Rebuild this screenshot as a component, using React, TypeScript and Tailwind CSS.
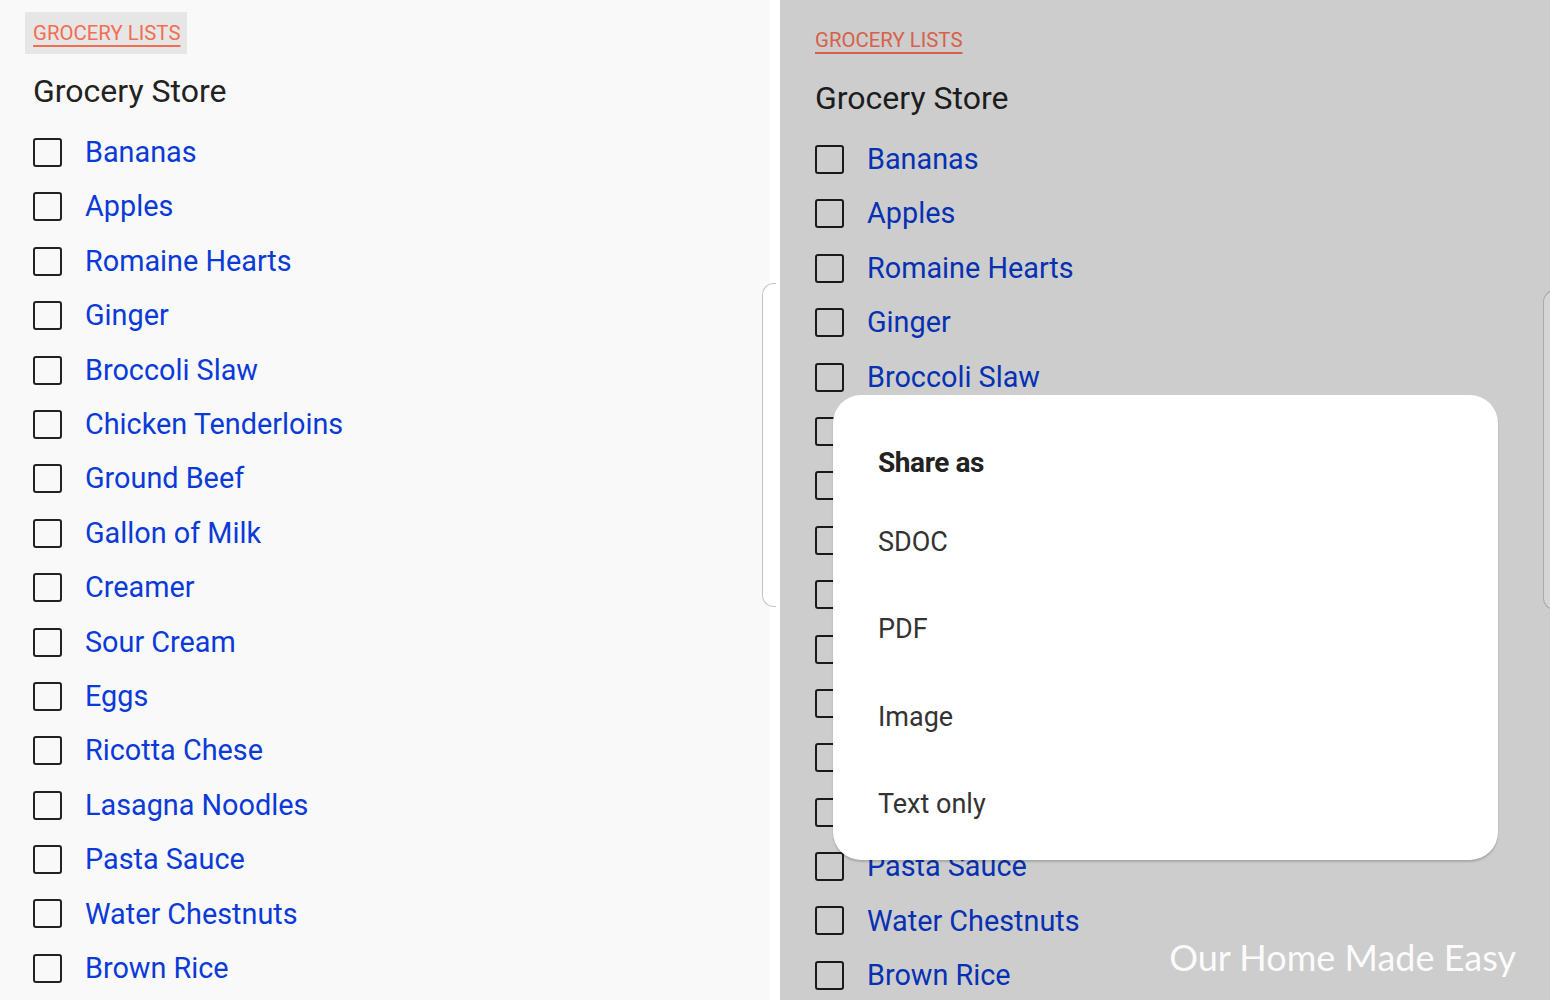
import React from "react";

const items = [
	"Bananas",
	"Apples",
	"Romaine Hearts",
	"Ginger",
	"Broccoli Slaw",
	"Chicken Tenderloins",
	"Ground Beef",
	"Gallon of Milk",
	"Creamer",
	"Sour Cream",
	"Eggs",
	"Ricotta Chese",
	"Lasagna Noodles",
	"Pasta Sauce",
	"Water Chestnuts",
	"Brown Rice",
];

const shareOptions = ["SDOC", "PDF", "Image", "Text only"];

type ListProps = { dimmed?: boolean };

const GroceryList = ({ dimmed = false }: ListProps) => {
	return (
		<div className={dimmed ? "pt-[19px] pl-[27px]" : "pt-[12px] pl-[25px]"}>
			<div
				className={`inline-flex h-[42px] items-center pl-[8px] pr-[7px] ${
					dimmed ? "bg-transparent" : "bg-[#e6e6e6]"
				}`}
			>
				<span
					className={`text-[20.4px] leading-none underline decoration-2 underline-offset-[5px] ${
						dimmed ? "text-[#d8604a]" : "text-[#f26d52]"
					}`}
				>
					GROCERY LISTS
				</span>
			</div>
			<h1
				className={`mt-[17px] pl-[8px] text-[32px] leading-[40px] font-normal ${
					dimmed ? "text-[#1c1c1c]" : "text-[#222222]"
				}`}
			>
				Grocery Store
			</h1>
			<ul className="mt-[14.3px] pl-[8px]">
				{items.map((item) => (
					<li key={item} className="flex h-[54.4px] items-center">
						<span
							className={`h-[29px] w-[29px] shrink-0 rounded-[3px] border-2 ${
								dimmed ? "border-[#1a1a1a]" : "border-[#222222]"
							}`}
						/>
						<span
							className={`ml-[23px] text-[28.8px] leading-none ${
								dimmed ? "text-[#0631b3]" : "text-[#0a3ad8]"
							}`}
						>
							{item}
						</span>
					</li>
				))}
			</ul>
		</div>
	);
};

export default function App() {
	return (
		<div
			className="flex h-[1000px] w-[1550px] overflow-hidden"
			style={{ fontFamily: "Roboto, 'Noto Sans', sans-serif" }}
		>
			<div className="relative w-[770px] shrink-0 bg-[#f9f9f9]">
				<GroceryList />
				<div className="absolute left-[762px] top-[283px] h-[324px] w-[14px] rounded-l-[12px] border-y border-l border-[#c4c4c4] bg-white" />
			</div>
			<div className="w-[10px] shrink-0 bg-white" />
			<div className="relative flex-1 bg-[#cdcdcd]">
				<GroceryList dimmed />
				<div className="absolute left-[763px] top-[290px] h-[320px] w-[14px] rounded-l-[12px] border-y border-l border-[#a9a9a9] bg-[#d5d5d5]" />

				<div className="absolute left-[53px] top-[395px] w-[665px] rounded-[28px] bg-white pt-[48px] pb-[12px] pl-[45px] shadow-[0_2px_2px_rgba(0,0,0,0.18)]">
					<h2 className="text-[28px] leading-[40px] font-bold tracking-[-0.015em] text-[#222222]">
						Share as
					</h2>
					<ul className="mt-[15px]">
						{shareOptions.map((opt) => (
							<li
								key={opt}
								className="flex h-[87.5px] items-center text-[27px] text-[#333333]"
							>
								{opt}
							</li>
						))}
					</ul>
				</div>

				<div
					className="absolute right-[34px] top-[934px] text-[36px] leading-[46px] text-white/95"
					style={{ fontFamily: "Lato, 'Open Sans', sans-serif" }}
				>
					Our Home Made Easy
				</div>
			</div>
		</div>
	);
}
